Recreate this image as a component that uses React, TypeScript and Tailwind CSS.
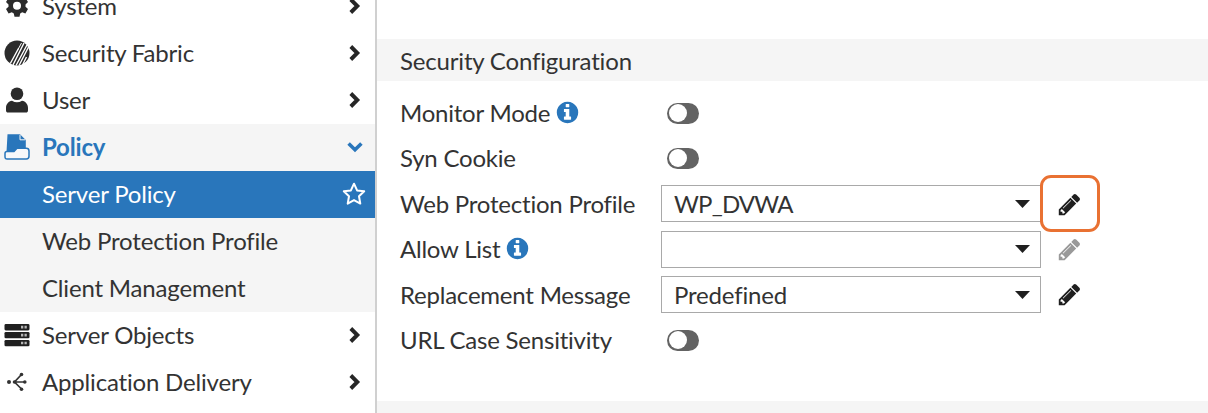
import type { ReactNode } from 'react';

function Chevron({ down = false }: { down?: boolean }) {
  return down ? (
    <svg className="-mt-px h-5 w-5 text-[#2976bb]" viewBox="0 0 20 20" fill="none" stroke="currentColor" strokeWidth="3.6">
      <path d="M3.6 6.5 10 12.7 16.4 6.5" />
    </svg>
  ) : (
    <svg className="-mt-px h-5 w-5 text-[#262626]" viewBox="0 0 20 20" fill="none" stroke="currentColor" strokeWidth="3.9">
      <path d="M5.8 3.5 12.3 10 5.8 16.5" />
    </svg>
  );
}

function GearIcon() {
  return (
    <svg className="h-[26px] w-[26px]" viewBox="0 0 26 26" fill="#2b2b2b">
      <path
        fillRule="evenodd"
        d="M10.5 1.5h5l.7 3.3 2 1.1 3.2-1.1 2.6 4.3-2.5 2.3v2.4l2.5 2.3-2.6 4.3-3.2-1.1-2 1.1-.7 3.3h-5l-.7-3.3-2-1.1-3.2 1.1L2 16.1l2.5-2.3v-2.4L2 9.1l2.6-4.3 3.2 1.1 2-1.1zM13 8.8a4 4 0 1 0 0 8 4 4 0 0 0 0-8z"
      />
    </svg>
  );
}

function FabricIcon() {
  return (
    <svg className="-mt-px h-[26px] w-[26px]" viewBox="0 0 26 26">
      <circle cx="13" cy="13" r="12.5" fill="#2b2b2b" />
      <g stroke="#fff" strokeWidth="1.4">
        <path d="M6.3 23.5 14.5 8.5M9 25 20 3M12 25.500 23 5M15 25.500 24.500 7M18.500 25 22.500 17" />
        <path d="M14 9.500 17.500 3" strokeWidth="1" />
      </g>
    </svg>
  );
}

function UserIcon() {
  return (
    <svg className="-mt-px h-[26px] w-[26px]" viewBox="0 0 26 26" fill="#2b2b2b">
      <circle cx="13" cy="6.700" r="6.300" />
      <path d="M8 13.700Q13 17 18 13.700c3.600.700 6 3.300 6 7.300v2.200c0 1.500-.700 2.300-2.200 2.300H4.200C2.700 25.500 2 24.700 2 23.200V21c0-4 2.400-6.600 6-7.300z" />
    </svg>
  );
}

function PolicyIcon() {
  return (
    <svg className="-mt-px h-[26px] w-[26px]" viewBox="0 0 26 26">
      <path d="M3.500.3H16l5.800 5.700V15h-7l-3 3H2.500z" fill="#2976bb" />
      <path d="M16 .8v5h5.300" fill="none" stroke="#f5f5f5" strokeWidth="1" />
      <path
        d="M3 17.500h7l3-3.200h9.300q2.700 0 2.700 2.700v5.300q0 2.700-2.700 2.700H3.200Q1 25 1 22.700V19.500q0-2 2-2z"
        fill="#f7f8fa"
        stroke="#2976bb"
        strokeWidth="1.500"
      />
    </svg>
  );
}

function ServersIcon() {
  return (
    <svg className="-mt-px h-[26px] w-[26px]" viewBox="0 0 26 26">
      {[2.1, 10, 17.9].map((y) => (
        <g key={y}>
          <rect x="0.500" y={y} width="25" height="6.300" rx="1.300" fill="#202020" />
          <path d={`M17 ${y + 3.1}h2.300M20.500 ${y + 3.1}h2.300`} stroke="#b5b5b5" strokeWidth="2.700" />
        </g>
      ))}
    </svg>
  );
}

function DeliveryIcon() {
  return (
    <svg className="-mt-px h-[26px] w-[26px]" viewBox="0 0 26 26" fill="#333" stroke="#333">
      <path d="M17.500 5.500 10.500 13l7 7M10.500 13H21" fill="none" strokeWidth="1.700" />
      <g stroke="none">
        <circle cx="5" cy="13" r="2" />
        <circle cx="10.500" cy="13" r="1.800" />
        <circle cx="17.500" cy="5.500" r="1.800" />
        <circle cx="20.800" cy="13" r="1.800" />
        <circle cx="17.500" cy="20.300" r="1.800" />
      </g>
    </svg>
  );
}

function Star() {
  return (
    <svg className="-mt-px h-6 w-6" viewBox="0 0 24 24" fill="none" stroke="#fff" strokeWidth="2" strokeLinejoin="round">
      <path d="m12 1.700 3.100 6.700 7.100.9-5.200 5 1.300 7.300-6.300-3.500-6.300 3.500L7 14.300l-5.200-5 7.100-.9z" />
    </svg>
  );
}

function Info() {
  return (
    <svg className="-mt-px h-[25px] w-[25px]" viewBox="0 0 1792 1792" fill="#2976bb">
      <path d="M1152 1376v-160q0-14-9-23t-23-9h-96v-512q0-14-9-23t-23-9h-320q-14 0-23 9t-9 23v160q0 14 9 23t23 9h96v320h-96q-14 0-23 9t-9 23v160q0 14 9 23t23 9h448q14 0 23-9t9-23zm-128-896v-160q0-14-9-23t-23-9h-192q-14 0-23 9t-9 23v160q0 14 9 23t23 9h192q14 0 23-9t9-23zm640 416q0 209-103 385.5t-279.5 279.5-385.5 103-385.5-103-279.5-279.5-103-385.5 103-385.5 279.5-279.5 385.5-103 385.5 103 279.5 279.5 103 385.5z" />
    </svg>
  );
}

function Pencil({ muted = false }: { muted?: boolean }) {
  return (
    <svg className="h-[25px] w-[25px]" viewBox="0 0 1792 1792" fill={muted ? '#999999' : '#1f1f1f'}>
      <path d="M491 1536l91-91-235-235-91 91v107h128v128h107zM1014 608q0-22-22-22-10 0-17 7l-542 542q-7 7-7 17 0 22 22 22 10 0 17-7l542-542q7-7 7-17zM960 416l416 416-832 832h-416v-416zM1643 512q0 53-37 90l-166 166-416-416 166-165q36-38 90-38 53 0 91 38l235 234q37 39 37 91z" />
    </svg>
  );
}

function MenuRow({ icon, label, open = false }: { icon: ReactNode; label: string; open?: boolean }) {
  return (
    <li className={`flex h-[47px] items-center pr-[10px] pl-1 ${open ? 'bg-[#f5f5f5] font-bold text-[#2976bb]' : ''}`}>
      <span className="w-[38px]">{icon}</span>
      <span className="flex-1">{label}</span>
      <Chevron down={open} />
    </li>
  );
}

function SubRow({ label, active = false }: { label: string; active?: boolean }) {
  return (
    <li
      className={`flex h-[47px] items-center justify-between pr-[9px] pl-[42px] ${
        active ? 'bg-[#2976bb] text-white' : 'bg-[#f5f5f5]'
      }`}
    >
      <span className="pb-px">{label}</span>
      {active && <Star />}
    </li>
  );
}

function Toggle() {
  return (
    <span className="ml-[6px] flex h-[21px] w-8 items-center rounded-full bg-[#636363] p-[1.5px]">
      <span className="h-[18px] w-[18px] rounded-full bg-white" />
    </span>
  );
}

function Select({ value, compact = false }: { value: string; compact?: boolean }) {
  return (
    <span className="flex h-[37px] w-[380px] items-center justify-between border-[1.5px] border-[#a9a9a9] bg-white pr-[10px] pl-3">
      <span className={compact ? 'tracking-[-0.8px]' : ''}>{value}</span>
      <svg className="h-2 w-[15px]" viewBox="0 0 15 8" fill="#1f1f1f">
        <path d="M0 0h15L7.500 8z" />
      </svg>
    </span>
  );
}

function Field({ label, info = false, children }: { label: string; info?: boolean; children: ReactNode }) {
  return (
    <div className="flex h-[45.4px] items-center">
      <span className="flex w-[261px] shrink-0 items-center gap-[5px]">
        <span className="tracking-[-0.22px]">{label}</span>
        {info && <Info />}
      </span>
      {children}
    </div>
  );
}

export default function App() {
  return (
    <div className="flex h-[413px] w-[1208px] overflow-hidden bg-white font-['Lato',sans-serif] text-[24px] leading-[30px] tracking-[-0.18px] whitespace-nowrap text-[#333333]">
      <nav className="w-[377px] shrink-0 overflow-hidden border-r-2 border-[#d0d0d0]">
        <ul className="-mt-[17.4px]">
          <MenuRow icon={<GearIcon />} label="System" />
          <MenuRow icon={<FabricIcon />} label="Security Fabric" />
          <MenuRow icon={<UserIcon />} label="User" />
          <MenuRow icon={<PolicyIcon />} label="Policy" open />
          <SubRow label="Server Policy" active />
          <SubRow label="Web Protection Profile" />
          <SubRow label="Client Management" />
          <MenuRow icon={<ServersIcon />} label="Server Objects" />
          <MenuRow icon={<DeliveryIcon />} label="Application Delivery" />
        </ul>
      </nav>
      <main className="flex min-w-0 flex-1 flex-col pt-[39px]">
        <h2 className="flex h-[42px] shrink-0 items-center bg-[#f5f5f5] pt-[2px] pl-[23px]">Security Configuration</h2>
        <div className="h-[320px] shrink-0 pt-[9.4px] pl-[23px]">
          <Field label="Monitor Mode" info>
            <Toggle />
          </Field>
          <Field label="Syn Cookie">
            <Toggle />
          </Field>
          <Field label="Web Protection Profile">
            <Select value="WP_DVWA" compact />
            <span className="-my-2 -ml-px flex h-[57px] w-[60px] items-center justify-center rounded-[11px] border-[3px] border-[#e97132] pt-px pr-[2px]">
              <Pencil />
            </span>
          </Field>
          <Field label="Allow List" info>
            <Select value="" />
            <span className="ml-4">
              <Pencil muted />
            </span>
          </Field>
          <Field label="Replacement Message">
            <Select value="Predefined" />
            <span className="ml-4">
              <Pencil />
            </span>
          </Field>
          <Field label="URL Case Sensitivity">
            <Toggle />
          </Field>
        </div>
        <div className="h-3 bg-[#f5f5f5]" />
      </main>
    </div>
  );
}
